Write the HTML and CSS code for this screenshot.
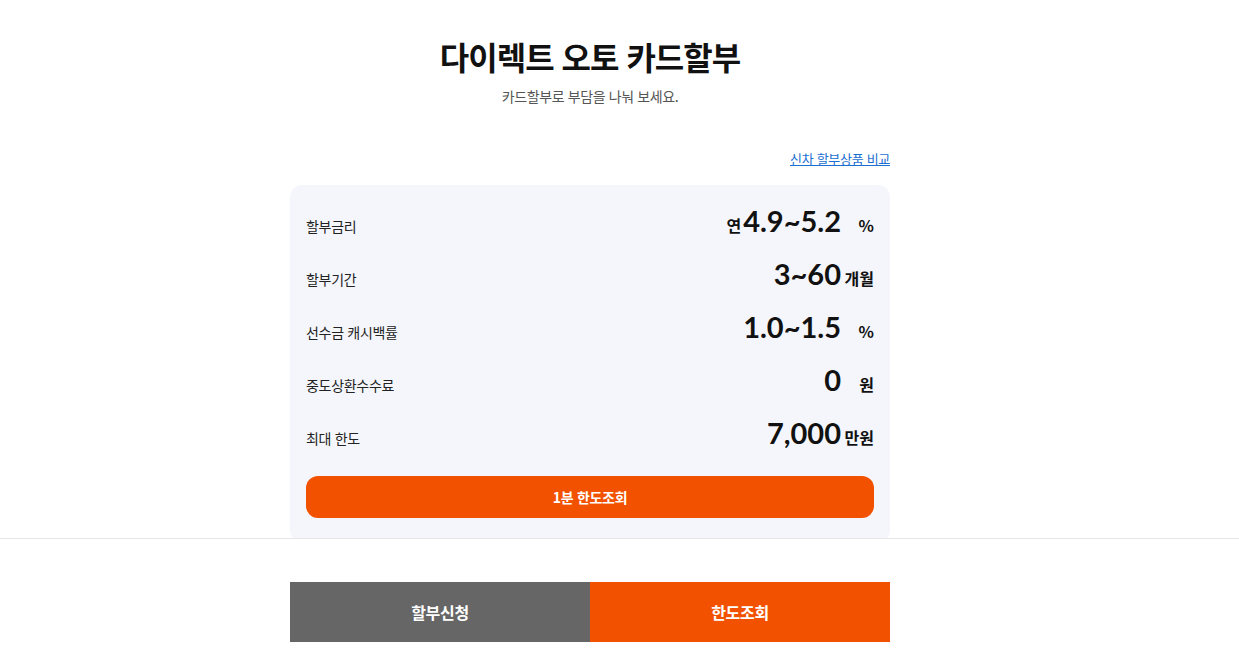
FILE: index.html
```html
<!DOCTYPE html>
<html lang="ko">
<head>
  <meta charset="utf-8">
  <meta name="viewport" content="width=device-width, initial-scale=1">
  <title>다이렉트 오토 카드할부</title>
  <link rel="stylesheet" href="styles.css">
</head>
<body>
<div class="page">
  <div class="content">
    <h1 class="title">다이렉트 오토 카드할부</h1>
    <p class="subtitle">카드할부로 부담을 나눠 보세요.</p>

    <div class="link-row">
      <a href="#" class="compare-link">신차 할부상품 비교</a>
    </div>

    <div class="card">
      <ul class="info-list">
        <li class="info-row">
          <span class="label">할부금리</span>
          <span class="value"><span class="prefix">연</span><strong class="num">4.9~5.2</strong><span class="unit">%</span></span>
        </li>
        <li class="info-row">
          <span class="label">할부기간</span>
          <span class="value"><strong class="num">3~60</strong><span class="unit">개월</span></span>
        </li>
        <li class="info-row">
          <span class="label">선수금 캐시백률</span>
          <span class="value"><strong class="num">1.0~1.5</strong><span class="unit">%</span></span>
        </li>
        <li class="info-row">
          <span class="label">중도상환수수료</span>
          <span class="value"><strong class="num">0</strong><span class="unit">원</span></span>
        </li>
        <li class="info-row">
          <span class="label">최대 한도</span>
          <span class="value"><strong class="num">7,000</strong><span class="unit">만원</span></span>
        </li>
      </ul>
      <button class="btn-limit">1분 한도조회</button>
    </div>
  </div>
</div>

<div class="bottom-bar">
  <div class="bottom-inner">
    <div class="bottom-btns">
      <button class="btn-apply">할부신청</button>
      <button class="btn-check">한도조회</button>
    </div>
  </div>
</div>
</body>
</html>
```

FILE: styles.css
```css
/* 기본 */
body {
  margin: 0;
  font-family: "Noto Sans CJK KR", "Noto Sans", sans-serif;
  color: #111;
  background: #fff;
  overflow: hidden;
}
.page {
  width: 1180px;
  padding-top: 34px;
}
.content {
  width: 600px;
  margin: 0 auto;
}
.title {
  margin: 0;
  font-size: 32px;
  line-height: 44px;
  font-weight: 700;
  letter-spacing: -1px;
  text-align: center;
  color: #111;
}
.subtitle {
  margin: 8px 0 0;
  font-size: 14px;
  line-height: 20px;
  letter-spacing: -0.4px;
  text-align: center;
  color: #555;
}
.link-row {
  margin-top: 41px;
  text-align: right;
  line-height: 20px;
}
.compare-link {
  font-size: 13px;
  letter-spacing: -0.3px;
  color: #1a6fd0;
  text-decoration: underline;
}

/* 카드 */
.card {
  margin-top: 16px;
  padding: 8px 16px 24px;
  background: #f5f6fb;
  border-radius: 12px;
}
.info-list {
  list-style: none;
  margin: 0;
  padding: 0;
}
.info-row {
  display: flex;
  justify-content: space-between;
  align-items: baseline;
  box-sizing: border-box;
  height: 53px;
  padding-top: 13px;
}
.label {
  font-size: 14px;
  color: #222;
  letter-spacing: -0.3px;
}
.value {
  display: flex;
  align-items: baseline;
}
.prefix {
  font-size: 16px;
  font-weight: 700;
  margin-right: 2px;
}
.num {
  font-family: Lato, "Noto Sans CJK KR", sans-serif;
  font-size: 29px;
  font-weight: 700;
  line-height: 1;
  color: #111;
}
.unit {
  width: 33px;
  text-align: right;
  font-size: 16px;
  font-weight: 700;
}
.btn-limit {
  display: block;
  width: 100%;
  height: 42px;
  margin-top: 18px;
  border: none;
  border-radius: 12px;
  background: #f25100;
  color: #fff;
  font-family: inherit;
  font-size: 14px;
  font-weight: 700;
  letter-spacing: -0.3px;
  cursor: pointer;
}

/* 하단 고정 버튼 */
.bottom-bar {
  position: fixed;
  left: 0;
  right: 0;
  bottom: 0;
  height: 119px;
  background: #fff;
  border-top: 1px solid #e6e6e6;
}
.bottom-inner {
  width: 1180px;
  padding-top: 43px;
}
.bottom-btns {
  display: flex;
  width: 600px;
  margin: 0 auto;
}
.bottom-btns button {
  flex: 1;
  height: 60px;
  border: none;
  color: #fff;
  font-family: inherit;
  font-size: 16px;
  font-weight: 700;
  letter-spacing: -0.3px;
  cursor: pointer;
}
.btn-apply {
  background: #666;
}
.btn-check {
  background: #f25100;
}
```
